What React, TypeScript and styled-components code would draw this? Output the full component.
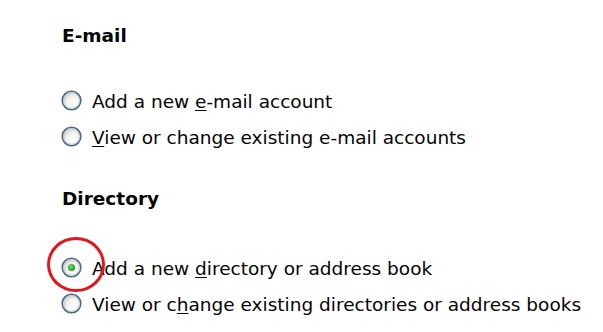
import React from "react";
import styled, { createGlobalStyle } from "styled-components";

const Global = createGlobalStyle`
  html, body { margin: 0; padding: 0; background: #ffffff; }
  body { font-family: "DejaVu Sans", sans-serif; color: #050505; }
`;

const Page = styled.div`
  width: 603px;
  height: 332px;
  box-sizing: border-box;
  padding: 26px 0 0 61px;
  background: #ffffff;
  overflow: hidden;
`;

const Section = styled.section<{ $gapAfter?: number }>`
  display: flex;
  flex-direction: column;
  margin-bottom: ${(p) => p.$gapAfter ?? 0}px;
`;

const Heading = styled.h3<{ $below: number }>`
  margin: 0 0 ${(p) => p.$below}px 1px;
  font-size: 18.5px;
  line-height: 20px;
  font-weight: bold;
`;

const Option = styled.label`
  position: relative;
  display: flex;
  align-items: center;
  gap: 10px;
  height: 36px;
  font-size: 18.5px;
  line-height: 20px;
  white-space: nowrap;
`;

const Text = styled.span`
  padding-top: 4px;
`;

const Key = styled.span`
  text-decoration: underline;
  text-underline-offset: 2px;
  text-decoration-thickness: 1px;
`;

const Highlight = styled.div`
  position: absolute;
  left: -14px;
  top: -12px;
  width: 58px;
  height: 55px;
  border: 3px solid #e0161c;
  border-radius: 50%;
  box-sizing: border-box;
  pointer-events: none;
`;

const RadioSvg = styled.svg`
  flex: none;
  width: 21px;
  height: 21px;
`;

function Radio({ checked, id }: { checked?: boolean; id: string }) {
  return (
    <RadioSvg viewBox="0 0 21 21">
      <defs>
        <radialGradient id={`f-${id}`} cx="65%" cy="70%" r="65%">
          <stop offset="0%" stopColor="#ffffff" />
          <stop offset="60%" stopColor="#f4f4f1" />
          <stop offset="100%" stopColor="#d8d8d2" />
        </radialGradient>
        <radialGradient id={`g-${id}`} cx="40%" cy="40%" r="60%">
          <stop offset="0%" stopColor="#6fe06f" />
          <stop offset="100%" stopColor="#1f9a1f" />
        </radialGradient>
      </defs>
      <circle cx="10.5" cy="10.5" r="9.3" fill={`url(#f-${id})`} stroke="#4d6a86" strokeWidth="1.6" />
      <circle cx="10.5" cy="10.5" r="7.8" fill="none" stroke="#b9c8d6" strokeWidth="0.9" />
      {checked && <circle cx="10.5" cy="10.5" r="3.6" fill={`url(#g-${id})`} />}
    </RadioSvg>
  );
}

export default function App() {
  return (
    <>
      <Global />
      <Page>
        <Section $gapAfter={35}>
          <Heading $below={36}>E-mail</Heading>
          <Option>
            <Radio id="a" />
            <Text>Add a new <Key>e</Key>-mail account</Text>
          </Option>
          <Option>
            <Radio id="b" />
            <Text><Key>V</Key>iew or change existing e-mail accounts</Text>
          </Option>
        </Section>
        <Section>
          <Heading $below={40}>Directory</Heading>
          <Option>
            <Radio id="c" checked />
            <Text>Add a new <Key>d</Key>irectory or address book</Text>
            <Highlight />
          </Option>
          <Option>
            <Radio id="d" />
            <Text>View or c<Key>h</Key>ange existing directories or address books</Text>
          </Option>
        </Section>
      </Page>
    </>
  );
}
